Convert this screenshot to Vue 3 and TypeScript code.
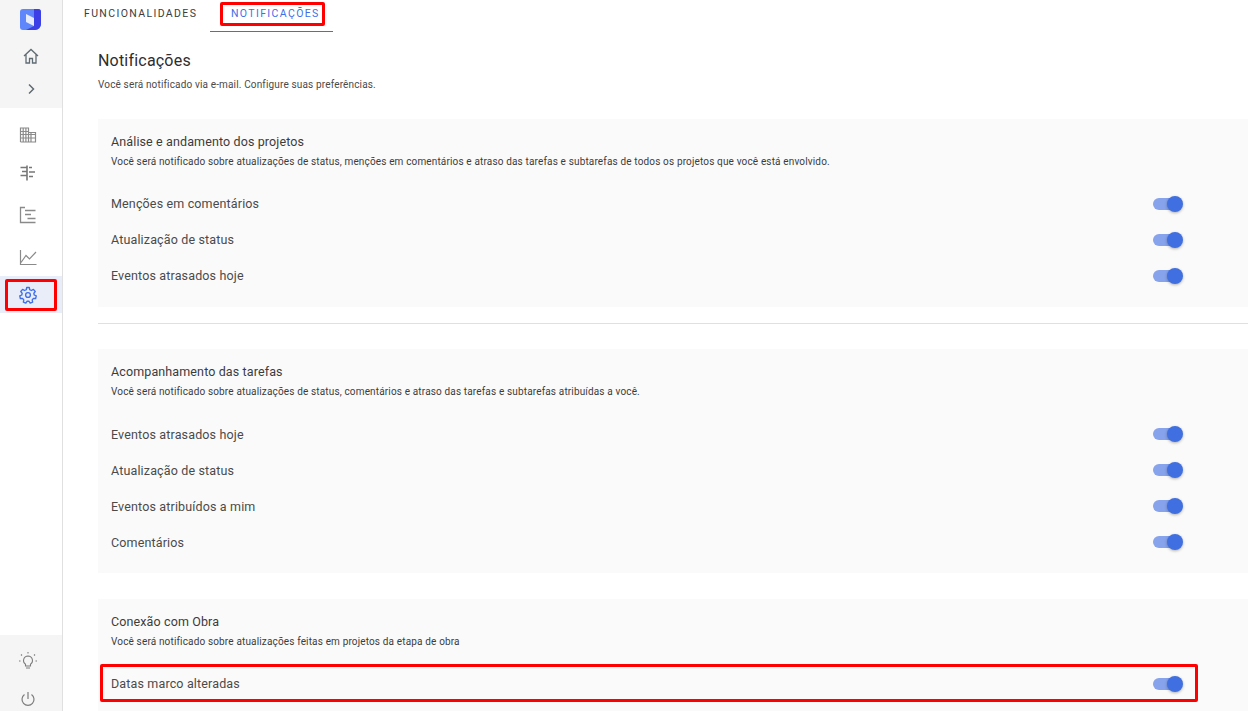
<script setup lang="ts">
interface Section {
  title: string
  desc: string
  rows: string[]
}
const sections: Section[] = [
  {
    title: 'Análise e andamento dos projetos',
    desc: 'Você será notificado sobre atualizações de status, menções em comentários e atraso das tarefas e subtarefas de todos os projetos que você está envolvido.',
    rows: ['Menções em comentários', 'Atualização de status', 'Eventos atrasados hoje'],
  },
  {
    title: 'Acompanhamento das tarefas',
    desc: 'Você será notificado sobre atualizações de status, comentários e atraso das tarefas e subtarefas atribuídas a você.',
    rows: ['Eventos atrasados hoje', 'Atualização de status', 'Eventos atribuídos a mim', 'Comentários'],
  },
  {
    title: 'Conexão com Obra',
    desc: 'Você será notificado sobre atualizações feitas em projetos da etapa de obra',
    rows: ['Datas marco alteradas'],
  },
]
</script>

<template>
  <div class="app">
    <aside class="side">
      <div class="side-top">
        <svg class="logo" width="21" height="21" viewBox="0 0 21 21">
          <path d="M3 0h15a3 3 0 0 1 3 3v12a6 6 0 0 1-6 6H3a3 3 0 0 1-3-3V3a3 3 0 0 1 3-3z" fill="#5f86fb" />
          <path d="M14 0h4a3 3 0 0 1 3 3v12a6 6 0 0 1-6 6H6l8-4z" fill="#3d3fe6" />
          <path d="M6 5l8 4v8L6 13z" fill="#e6ebfb" />
        </svg>
        <svg class="ic home" width="16" height="16" viewBox="0 0 16 16" fill="none" stroke="#5f6b73" stroke-width="1.300">
          <path d="M1 8l7-6.500L15 8M3 6.500V15h3.500v-4.500h3V15H13V6.500" />
        </svg>
        <svg class="ic chev" width="12" height="12" viewBox="0 0 12 12" fill="none" stroke="#5f6b73" stroke-width="1.500">
          <path d="M4 1.500L8.500 6 4 10.500" />
        </svg>
      </div>
      <div class="side-mid">
        <div class="nav">
          <svg width="18" height="18" viewBox="0 0 18 18" fill="none" stroke="#8a8a8a" stroke-width="1.200">
            <path d="M1.500 16V2h8v14M9.500 6.500h7V16H1.500M1.500 5.500h8M1.500 8.500h15M1.500 12h15M4.200 2v14M6.900 2v14M12 6.500V16" />
          </svg>
        </div>
        <div class="nav">
          <svg width="18" height="18" viewBox="0 0 18 18" fill="none" stroke="#777" stroke-width="1.600">
            <path d="M8 1.500v15M1.500 3.500H8M3 7.500h5M1.500 11.500H8M10 3.500h3M10 8h6M10 12.500h4" />
          </svg>
        </div>
        <div class="nav">
          <svg width="18" height="18" viewBox="0 0 18 18" fill="none" stroke="#8a8a8a" stroke-width="1.300">
            <path d="M6 1.500H1.500v15h15M6 4.500h10.500M6 8.500h6M8.500 12.500h8" />
          </svg>
        </div>
        <div class="nav">
          <svg width="18" height="18" viewBox="0 0 18 18" fill="none" stroke="#8a8a8a" stroke-width="1.200">
            <path d="M1.500 2v14.500h16M2 14.500l5-7 3.500 3.500L17 4" />
          </svg>
        </div>
        <div class="nav active">
          <svg width="18" height="18" viewBox="0 0 24 24" fill="none" stroke="#3f6fe8" stroke-width="1.800">
            <circle cx="12" cy="12" r="3.200" />
            <path d="M10.300 2h3.400l.6 3 2.200 1 2.700-1.500 2.400 2.900-1.800 2.300.5 2.300 2.700 1.200-.8 3.500-3-.1-1.600 1.900.6 3-3.300 1.300-1.700-2.500h-2.400l-1.700 2.500-3.300-1.300.6-3-1.600-1.900-3 .1-.8-3.500 2.700-1.200.5-2.300-1.800-2.300 2.400-2.900 2.700 1.500 2.200-1z" stroke-linejoin="round" />
          </svg>
        </div>
      </div>
      <div class="side-bot">
        <svg width="20" height="20" viewBox="0 0 20 20" fill="none" stroke="#7d7d7d" stroke-width="1.100">
          <path d="M10 5a4.500 4.500 0 0 0-2.500 8.200V15h5v-1.800A4.500 4.500 0 0 0 10 5zM8 17h4M10 1v1.500M3 3.500l1 1M17 3.500l-1 1M1 10h1.500M17.500 10H19" />
        </svg>
        <svg width="16" height="16" viewBox="0 0 16 16" fill="none" stroke="#7d7d7d" stroke-width="1.200">
          <path d="M8 1v7M4.500 3.500a6 6 0 1 0 7 0" />
        </svg>
      </div>
    </aside>

    <main class="main">
      <nav class="tabs">
        <span class="tab tab-one">FUNCIONALIDADES</span>
        <span class="tab tab-two">NOTIFICAÇÕES</span>
      </nav>
      <div class="content">
        <h1 class="title">Notificações</h1>
        <p class="sub">Você será notificado via e-mail. Configure suas preferências.</p>
        <template v-for="(s, i) in sections" :key="s.title">
          <hr v-if="i === 1" class="rule" />
          <section class="panel" :class="{ gap: i === 2, shifted: i === 1 }">
            <h2 class="p-title">{{ s.title }}</h2>
            <p class="p-desc">{{ s.desc }}</p>
            <div v-for="r in s.rows" :key="r" class="row">
              <span>{{ r }}</span>
              <span class="toggle"><i class="track"></i><i class="thumb"></i></span>
            </div>
          </section>
        </template>
      </div>
    </main>

    <div class="mark mark-tab"></div>
    <div class="mark mark-side"></div>
    <div class="mark mark-row"></div>
  </div>
</template>

<style scoped>
.app {
  position: relative;
  display: flex;
  width: 1248px;
  height: 711px;
  overflow: hidden;
  background: #fff;
  font-family: Roboto, "Liberation Sans", sans-serif;
}
.side {
  width: 62px;
  flex: none;
  border-right: 1px solid #e0e0e0;
  display: flex;
  flex-direction: column;
  background: #fff;
}
.side-top {
  height: 108px;
  background: #f5f5f5;
  display: flex;
  flex-direction: column;
  align-items: center;
  padding: 9px 1px 0 0;
  box-sizing: border-box;
}
.home {
  margin-top: 18px;
}
.chev {
  margin-top: 19px;
}
.side-mid {
  flex: 1;
  padding-top: 8px;
}
.nav {
  height: 38px;
  display: flex;
  align-items: center;
  justify-content: center;
  padding-right: 6px;
}
.nav:nth-child(3),
.nav:nth-child(4) {
  margin-top: 4px;
}
.nav.active {
  background: #e8edf9;
  height: 37px;
}
.side-bot {
  height: 76px;
  background: #f5f5f5;
  display: flex;
  flex-direction: column;
  align-items: center;
  gap: 20px;
  padding: 16px 6px 0 0;
  box-sizing: border-box;
}
.main {
  flex: 1;
  min-width: 0;
}
.tabs {
  height: 32px;
  display: flex;
  box-sizing: border-box;
}
.tab {
  font-size: 10.500px;
  font-weight: 400;
  letter-spacing: 1.370px;
  line-height: 27px;
  height: 32px;
  box-sizing: border-box;
  color: #3c3c3c;
}
.tab-one {
  width: 147px;
  padding-left: 21px;
}
.tab-two {
  width: 123px;
  padding-left: 21px;
  color: #3f6fe8;
  border-bottom: 1px solid #3f6fe8;
}
.content {
  padding-left: 35px;
}
.title {
  margin: 19px 0 0;
  font-size: 16px;
  font-weight: 400;
  line-height: 20px;
  letter-spacing: .2px;
  color: #2e2e2e;
}
.sub {
  margin: 8px 0 0;
  font-size: 10px;
  line-height: 12px;
  letter-spacing: .15px;
  color: #4a4a4a;
}
.panel {
  margin-top: 28px;
  background: #fafafa;
  padding: 15px 13px 14px;
}
.panel.gap {
  margin-top: 26px;
}
.panel.shifted {
  padding-bottom: 13px;
}
.p-title {
  margin: 0;
  font-size: 12.500px;
  font-weight: 400;
  line-height: 16px;
  letter-spacing: .12px;
  color: #3c3c3c;
}
.p-desc {
  margin: 6px 0 17px;
  font-size: 10px;
  line-height: 12px;
  letter-spacing: .15px;
  color: #3c3c3c;
}
.shifted .p-desc {
  margin-bottom: 18px;
}
.row {
  height: 36px;
  display: flex;
  align-items: center;
  justify-content: space-between;
  font-size: 12.500px;
  letter-spacing: .15px;
  color: #4a4a4a;
  padding-right: 52px;
}
.toggle {
  position: relative;
  top: 1px;
  display: block;
  width: 30px;
  height: 16px;
}
.shifted .toggle {
  top: 0;
}
.track {
  position: absolute;
  left: 0;
  top: 2px;
  width: 28px;
  height: 12px;
  border-radius: 6px;
  background: #86a3ec;
}
.thumb {
  position: absolute;
  right: 0;
  top: 0;
  width: 16px;
  height: 16px;
  border-radius: 50%;
  background: #3f6fe0;
  box-shadow: 0 1px 3px rgba(0, 0, 0, .3);
}
.rule {
  margin: 16px 0 0;
  border: 0;
  border-top: 1px solid #e0e0e0;
}
.rule + .panel {
  margin-top: 25px;
}
.mark {
  position: absolute;
  box-sizing: border-box;
  border: 3px solid #f00;
  border-radius: 2px;
  pointer-events: none;
}
.mark-tab {
  left: 220px;
  top: 2px;
  width: 105px;
  height: 24px;
}
.mark-side {
  left: 5px;
  top: 279px;
  width: 52px;
  height: 32px;
}
.mark-row {
  left: 100px;
  top: 664px;
  width: 1098px;
  height: 38px;
}
</style>
